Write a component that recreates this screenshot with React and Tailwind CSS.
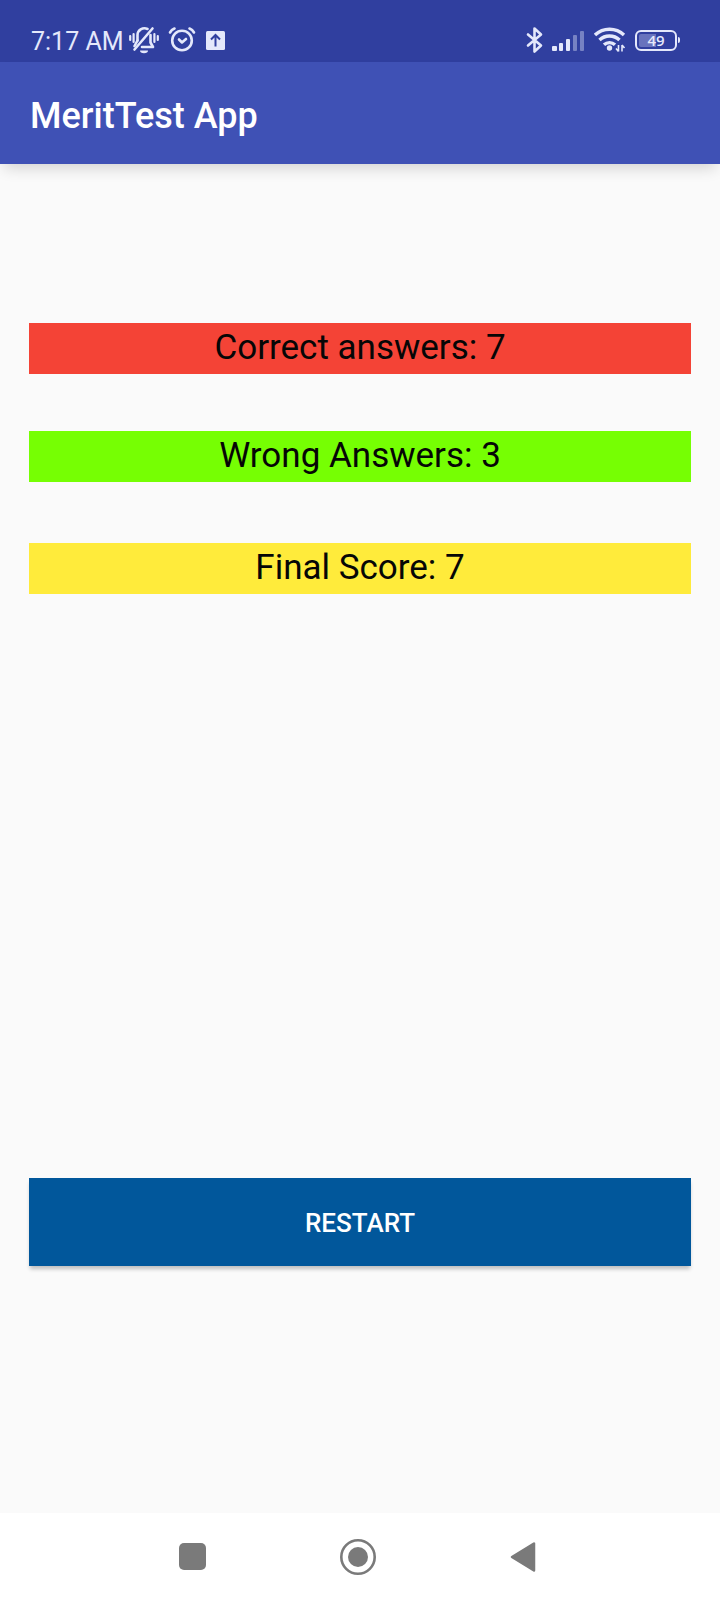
function BellOffIcon() {
  return (
    <svg width="30" height="28" viewBox="0 0 30 28" fill="none" stroke="#e4e8fb" strokeWidth="2.200" strokeLinecap="round" aria-hidden="true">
      <path d="M1.200 10v4M4.600 8v8M28.800 10v4M25.400 8v8" />
      <path d="M5.500 23.500 23.500 2.500" strokeWidth="2.600" />
      <path d="M8.500 14.500V9.500a7 7 0 0 1 10-6.500" strokeWidth="2.600" />
      <path d="M21.500 9v7.500l2.500 4.500H13" strokeWidth="2.600" strokeLinejoin="round" />
      <path d="M8.500 14.500 5.500 20" strokeWidth="2.600" />
      <path d="M11 24.500h8a4 2.800 0 0 1-8 0z" fill="#e4e8fb" stroke="none" />
    </svg>
  );
}

function AlarmIcon() {
  return (
    <svg width="28" height="28" viewBox="0 0 28 28" fill="none" stroke="#e4e8fb" strokeWidth="2.600" strokeLinecap="round" strokeLinejoin="round" aria-hidden="true">
      <circle cx="14" cy="14.500" r="9.800" />
      <path d="M2 6.500 A9 9 0 0 1 6.500 2.500M26 6.500A9 9 0 0 0 21.500 2.500" />
      <path d="m11 13.500 3 3 4-3.500" />
    </svg>
  );
}

function UploadIcon() {
  return (
    <svg width="19" height="28" viewBox="0 0 19 28" fill="none" aria-hidden="true">
      <rect x="0" y="5" width="19" height="19" rx="1.500" fill="#e4e8fb" />
      <path d="M9.500 20.500v-11M5 13.500l4.500-4.500 4.500 4.500" stroke="#303f9f" strokeWidth="2" />
    </svg>
  );
}

function BluetoothIcon() {
  return (
    <svg width="17" height="28" viewBox="0 0 17 28" fill="none" stroke="#e4e8fb" strokeWidth="2.600" strokeLinejoin="round" strokeLinecap="round" aria-hidden="true">
      <path d="M2 8.500 15 19.500 8.500 25.500V2.500L15 8.500 2 19.500" />
    </svg>
  );
}

function SignalIcon() {
  return (
    <svg width="33" height="28" viewBox="0 0 33 28" fill="#e4e8fb" aria-hidden="true">
      <rect x="0" y="20" width="5" height="5" rx="1" />
      <rect x="7" y="17" width="4" height="8" rx="1" />
      <rect x="14" y="13" width="4" height="12" rx="1" />
      <rect x="21" y="9" width="4" height="16" rx="1" opacity="0.4" />
      <rect x="28" y="5" width="4" height="20" rx="1" opacity="0.4" />
    </svg>
  );
}

function WifiIcon() {
  return (
    <svg width="32" height="28" viewBox="0 0 32 28" fill="none" stroke="#e4e8fb" strokeWidth="3.400" aria-hidden="true">
      <path d="M1 9a21 21 0 0 1 29 0" />
      <path d="M5.500 14a14.500 14.500 0 0 1 20 0" />
      <path d="M10 18.800a8 8 0 0 1 11 0" />
      <circle cx="15.500" cy="22" r="2.700" fill="#e4e8fb" stroke="none" />
      <path d="M24.500 19v6.500M22 22.500l2.500 3M28 25.500v-6.500M30.500 22 28 19" strokeWidth="1.600" />
    </svg>
  );
}

function Battery({ level }) {
  return (
    <div className="flex items-center gap-px" role="img" aria-label={`Battery ${level}%`}>
      <div className="flex h-[21px] w-[42px] items-center justify-center rounded-md border-2 border-[#e4e8fb] bg-[linear-gradient(90deg,#6873bd_49%,transparent_49%)] bg-clip-content p-0.5 font-['Open_Sans',sans-serif] text-[15px] leading-4 font-semibold text-[#e4e8fb]">
        {level}
      </div>
      <div className="h-1.5 w-0.5 rounded-r bg-[#e4e8fb]" />
    </div>
  );
}

function StatusBar() {
  return (
    <div className="flex h-[62px] items-center justify-between bg-[#303f9f] pt-[18px] pr-10 pl-[31px]">
      <div className="flex items-center">
        <span className="pt-[3px] text-[25px] leading-7 text-[#e4e8fb]">7:17 AM</span>
        <div className="ml-[5px] flex items-center gap-[9px]">
          <BellOffIcon />
          <AlarmIcon />
          <div className="ml-px">
            <UploadIcon />
          </div>
        </div>
      </div>
      <div className="flex items-center gap-[9px]">
        <BluetoothIcon />
        <SignalIcon />
        <WifiIcon />
        <Battery level={49} />
      </div>
    </div>
  );
}

function NavigationBar() {
  const button = "flex h-full w-[165px] items-center justify-center";
  return (
    <nav className="flex h-[87px] items-center justify-center bg-white pr-[5px]" aria-label="System navigation">
      <button type="button" className={button} aria-label="Recent apps">
        <svg width="27" height="27" viewBox="0 0 27 27" aria-hidden="true">
          <rect width="27" height="27" rx="5" fill="#7a7a7a" />
        </svg>
      </button>
      <button type="button" className={button} aria-label="Home">
        <svg width="36" height="36" viewBox="0 0 36 36" aria-hidden="true">
          <circle cx="18" cy="18" r="16.700" fill="none" stroke="#7a7a7a" strokeWidth="2.600" />
          <circle cx="18" cy="18" r="10" fill="#7a7a7a" />
        </svg>
      </button>
      <button type="button" className={button} aria-label="Back">
        <svg width="26" height="32" viewBox="0 0 26 32" aria-hidden="true">
          <path d="M2 16 24 2.500v27z" fill="#7a7a7a" stroke="#7a7a7a" strokeWidth="2.500" strokeLinejoin="round" />
        </svg>
      </button>
    </nav>
  );
}

export default function App() {
  const result = "h-[51px] text-center text-[35px] leading-[50px] text-[#060606]";
  return (
    <div className="flex min-h-screen flex-col bg-[#fafafa] font-[Roboto,sans-serif]">
      <StatusBar />
      <header className="flex h-[102px] items-center bg-[#3f51b5] px-[30px] pt-1.5 shadow-[0_8px_14px_-4px_rgba(0,0,0,0.16)]">
        <h1 className="text-[36px] leading-10 font-medium text-white">MeritTest App</h1>
      </header>
      <main className="flex flex-1 flex-col px-[29px] pt-[159px] pb-[247px]">
        <p className={`${result} bg-[#f44336]`}>Correct answers: 7</p>
        <p className={`${result} mt-[57px] bg-[#76ff03]`}>Wrong Answers: 3</p>
        <p className={`${result} mt-[61px] bg-[#ffeb3b]`}>Final Score: 7</p>
        <button type="button" className="mt-auto h-[88px] bg-[#01579b] pt-0.5 text-[26px] leading-8 font-medium text-white shadow-[0_4px_4px_-1px_rgba(0,0,0,0.24)]">
          RESTART
        </button>
      </main>
      <NavigationBar />
    </div>
  );
}
